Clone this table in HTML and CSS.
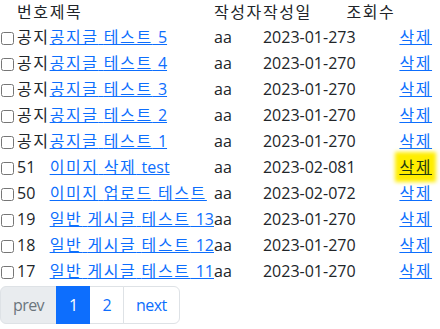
FILE: index.html
```html
<!DOCTYPE html>
<html lang="ko">
<head>
<meta charset="utf-8">
<link rel="stylesheet" href="styles.css">
</head>
<body>
<table class="board">
  <thead>
    <tr><th></th><th class="k">번호</th><th class="k">제목</th><th class="k">작성자</th><th class="k">작성일</th><th class="k">조회수</th><th></th></tr>
  </thead>
  <tbody>
    <tr><td><input type="checkbox" class="chk"></td><td class="k">공지</td><td><a href="#" class="title"><span class="k">공지글</span> <span class="k">테스트</span> 5</a></td><td>aa</td><td>2023-01-27</td><td>3</td><td class="act"><a href="#" class="k">삭제</a></td></tr>
    <tr><td><input type="checkbox" class="chk"></td><td class="k">공지</td><td><a href="#" class="title"><span class="k">공지글</span> <span class="k">테스트</span> 4</a></td><td>aa</td><td>2023-01-27</td><td>0</td><td class="act"><a href="#" class="k">삭제</a></td></tr>
    <tr><td><input type="checkbox" class="chk"></td><td class="k">공지</td><td><a href="#" class="title"><span class="k">공지글</span> <span class="k">테스트</span> 3</a></td><td>aa</td><td>2023-01-27</td><td>0</td><td class="act"><a href="#" class="k">삭제</a></td></tr>
    <tr><td><input type="checkbox" class="chk"></td><td class="k">공지</td><td><a href="#" class="title"><span class="k">공지글</span> <span class="k">테스트</span> 2</a></td><td>aa</td><td>2023-01-27</td><td>0</td><td class="act"><a href="#" class="k">삭제</a></td></tr>
    <tr><td><input type="checkbox" class="chk"></td><td class="k">공지</td><td><a href="#" class="title"><span class="k">공지글</span> <span class="k">테스트</span> 1</a></td><td>aa</td><td>2023-01-27</td><td>0</td><td class="act"><a href="#" class="k">삭제</a></td></tr>
    <tr><td><input type="checkbox" class="chk"></td><td>51</td><td><a href="#" class="title"><span class="k">이미지</span> <span class="k">삭제</span> test</a></td><td>aa</td><td>2023-02-08</td><td>1</td><td class="act"><a href="#" class="k hl">삭제</a></td></tr>
    <tr><td><input type="checkbox" class="chk"></td><td>50</td><td><a href="#" class="title"><span class="k">이미지</span> <span class="k">업로드</span> <span class="k">테스트</span></a></td><td>aa</td><td>2023-02-07</td><td>2</td><td class="act"><a href="#" class="k">삭제</a></td></tr>
    <tr><td><input type="checkbox" class="chk"></td><td>19</td><td><a href="#" class="title"><span class="k">일반</span> <span class="k">게시글</span> <span class="k">테스트</span> 13</a></td><td>aa</td><td>2023-01-27</td><td>0</td><td class="act"><a href="#" class="k">삭제</a></td></tr>
    <tr><td><input type="checkbox" class="chk"></td><td>18</td><td><a href="#" class="title"><span class="k">일반</span> <span class="k">게시글</span> <span class="k">테스트</span> 12</a></td><td>aa</td><td>2023-01-27</td><td>0</td><td class="act"><a href="#" class="k">삭제</a></td></tr>
    <tr><td><input type="checkbox" class="chk"></td><td>17</td><td><a href="#" class="title"><span class="k">일반</span> <span class="k">게시글</span> <span class="k">테스트</span> 11</a></td><td>aa</td><td>2023-01-27</td><td>0</td><td class="act"><a href="#" class="k">삭제</a></td></tr>
  </tbody>
</table>
<ul class="pagination">
  <li class="page-item disabled"><span class="page-link">prev</span></li>
  <li class="page-item active"><a class="page-link" href="#">1</a></li>
  <li class="page-item"><a class="page-link" href="#">2</a></li>
  <li class="page-item"><a class="page-link" href="#">next</a></li>
</ul>
</body>
</html>
```
FILE: styles.css
```css
* { box-sizing: border-box; }
body {
  margin: 0;
  font-family: "Open Sans", "Noto Sans CJK KR", sans-serif;
  font-size: 16px;
  line-height: 1.5;
  color: #212529;
  background: #fff;
}
a { color: #0d6efd; text-decoration: underline; }
.k { letter-spacing: 1.6px; }
.title { word-spacing: 1px; }
.board {
  border-collapse: collapse;
}
.board th, .board td {
  padding: 0;
  text-align: left;
  font-weight: normal;
  white-space: nowrap;
  vertical-align: middle;
}
.board th { height: 24px; }
.board td { height: 26px; }
.board td.act { padding-left: 4px; }
.chk {
  margin: 3px 3px 3px 1px;
  width: 13px;
  height: 13px;
  vertical-align: -2px;
}
.hl {
  color: #1f3a0f;
  background: #ffee00;
  box-shadow: 0 0 4px 4px #ffee00;
}
.pagination {
  display: flex;
  list-style: none;
  padding: 0;
  margin: 2px 0 16px;
}
.page-link {
  display: block;
  padding: 6px 12px;
  border: 1px solid #dee2e6;
  color: #0d6efd;
  background: #fff;
  text-decoration: none;
  margin-left: -1px;
  letter-spacing: -0.6px;
}
.page-item:first-child .page-link {
  margin-left: 0;
  border-radius: 6px 0 0 6px;
}
.page-item:last-child .page-link { border-radius: 0 6px 6px 0; }
.page-item.disabled .page-link {
  color: #6c757d;
  background: #e9ecef;
}
.page-item.active .page-link {
  color: #fff;
  background: #0d6efd;
  border-color: #0d6efd;
  position: relative;
}
```
